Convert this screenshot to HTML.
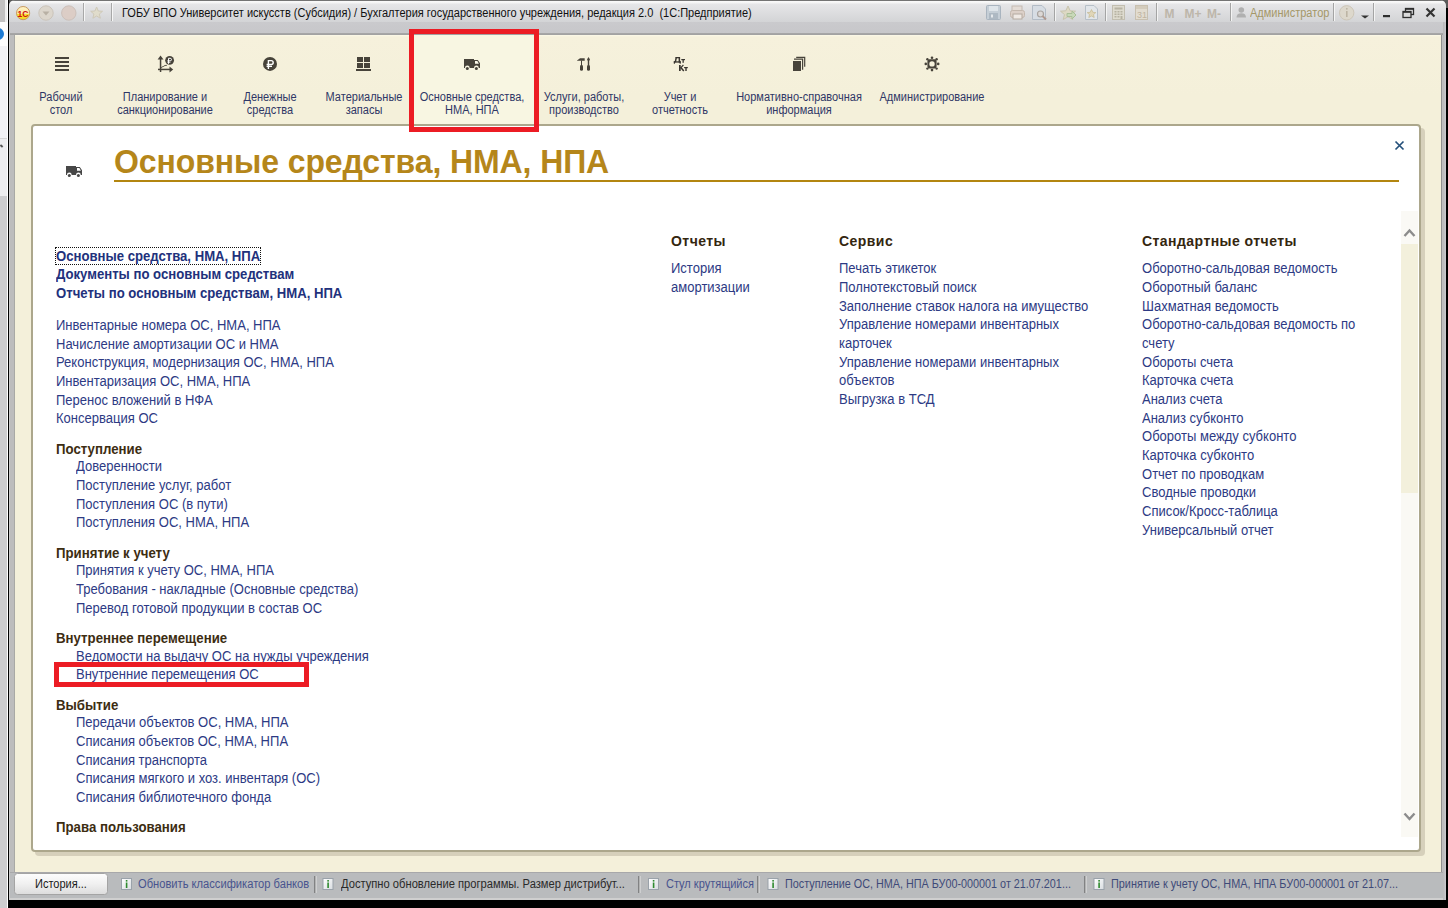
<!DOCTYPE html>
<html><head><meta charset="utf-8">
<style>
*{margin:0;padding:0;box-sizing:border-box}
html,body{width:1448px;height:908px;overflow:hidden;background:#000;font-family:"Liberation Sans",sans-serif}
.a{position:absolute}
#win{left:9px;top:0;width:1437px;height:900px;background:#bdbdbd;border-radius:6px 6px 0 0;overflow:hidden}
#titlebar{left:0;top:0;width:1437px;height:22px;background:linear-gradient(#5e5e5e 0,#8a8a8a 1px,#fbfbfb 1px,#f4f4f4 3px,#e6e6e8 4px,#d3d4d6 22px)}
#band{left:0;top:22px;width:1437px;height:13px;background:linear-gradient(#cacacd 0,#c7c7ca 11px,#a8a8a8 11px,#a0a0a0 13px)}
#cream{left:15px;top:35px;width:1426px;height:837px;background:linear-gradient(#fcf9e8 0,#f6f1dc 2px,#f4f0da 60px,#f4f0da)}
#status{left:9px;top:872px;width:1437px;height:28px;background:#b9bbbd;border-top:1px solid #a8a8aa;border-bottom:2px solid #cfcfcf}
.nav{position:absolute;top:91px;font-size:12px;line-height:13px;color:#2f3766;text-align:center;white-space:nowrap;transform:scaleX(.917)}
#panel{left:31px;top:124px;width:1390px;height:728px;background:#fff;border:2px solid #aca78c;border-radius:4px;box-shadow:4px 4px 0 #d6d0bb}
.t{position:absolute;white-space:nowrap;font-size:14px;line-height:16px;color:#2d3a84;transform:scaleX(.93);transform-origin:0 0}
.b{font-weight:bold;transform:scaleX(.938);color:#22317c}
.h{font-weight:bold;color:#3d2d12;transform:scaleX(.945)}
.h14{font-weight:bold;color:#34260f;font-size:14px;line-height:16px;letter-spacing:.45px;transform:none}
.red{position:absolute;border:5px solid #ec1c24}
.tt{position:absolute;white-space:nowrap;font-size:12px;line-height:13px;transform:scaleX(.917);transform-origin:0 0}
</style></head><body>
<div class="a" style="left:0;top:0;width:7px;height:908px;background:#cdcdcf"></div>
<div class="a" style="left:0;top:0;width:5px;height:22px;background:#c2c1c1"></div>
<div class="a" style="left:5px;top:0;width:2px;height:22px;background:#ededed"></div>
<div class="a" style="left:0;top:22px;width:7px;height:24px;background:#fdfdfd"></div>
<div class="a" style="left:-8px;top:28px;width:12px;height:12px;border-radius:50%;background:#1d7bd4"></div>
<div class="a" style="left:0;top:46px;width:7px;height:92px;background:#f2f2f5"></div>
<div class="a" style="left:0;top:138px;width:7px;height:1px;background:#d6d6d6"></div>
<div class="a" style="left:0;top:139px;width:7px;height:57px;background:#ededef"></div>
<div class="a" style="left:0;top:145px;width:3px;height:2px;background:#555;transform:rotate(40deg)"></div>
<div class="a" style="left:7px;top:0;width:1px;height:908px;background:#fff"></div>
<div class="a" style="left:8px;top:0;width:1px;height:908px;background:#000"></div>
<div class="a" style="left:9px;top:0;width:1439px;height:8px;background:#5a5a5a"></div>
<div id="win" class="a">
  <div id="titlebar" class="a"></div>
  <div id="band" class="a"></div>
</div>
<div id="cream" class="a"></div>
<div class="a" style="left:414px;top:35px;width:120px;height:92px;background:#f8f6e2"></div>
<div id="status" class="a"></div>

<!-- title -->
<div class="tt" style="left:1250px;top:7px;color:#a49768">Администратор</div>
<div class="a" style="left:14px;top:35px;width:1px;height:837px;background:#a9a9a5"></div>
<div class="a" style="left:9px;top:22px;width:1px;height:878px;background:#cbcbcb"></div>
<div class="a" style="left:1441px;top:35px;width:1px;height:837px;background:#8f8f8f"></div>
<div class="a" style="left:1443px;top:22px;width:3px;height:878px;background:linear-gradient(90deg,#b9b9b9,#c9c9cd)"></div>
<div class="tt" style="left:122px;top:7px;color:#111">ГОБУ ВПО Университет искусств (Субсидия) / Бухгалтерия государственного учреждения, редакция 2.0&nbsp; (1С:Предприятие)</div>

<!-- nav -->
<div class="nav" style="left:21px;width:80px">Рабочий<br>стол</div>
<div class="nav" style="left:105px;width:120px">Планирование и<br>санкционирование</div>
<div class="nav" style="left:230px;width:80px">Денежные<br>средства</div>
<div class="nav" style="left:314px;width:100px">Материальные<br>запасы</div>
<div class="nav" style="left:412px;width:120px">Основные средства,<br>НМА, НПА</div>
<div class="nav" style="left:524px;width:120px">Услуги, работы,<br>производство</div>
<div class="nav" style="left:630px;width:100px">Учет и<br>отчетность</div>
<div class="nav" style="left:729px;width:140px">Нормативно-справочная<br>информация</div>
<div class="nav" style="left:862px;width:140px">Администрирование</div>


<!-- panel -->
<div id="panel" class="a"></div>
<div class="a" style="left:114px;top:180px;width:1285px;height:2px;background:#b38610"></div>
<div class="t" style="left:114px;top:143px;font-size:32px;line-height:36px;font-weight:bold;letter-spacing:-0.1px;transform:scaleY(1.045);transform-origin:0 0;color:#b5861a">Основные средства, НМА, НПА</div>

<svg class="a" style="left:0;top:0" width="1448" height="908" viewBox="0 0 1448 908">
<defs>
 <linearGradient id="g1c" x1="0" y1="0" x2="0" y2="1"><stop offset="0" stop-color="#fff3c8"/><stop offset=".55" stop-color="#fde9a0"/><stop offset=".6" stop-color="#f8e030"/><stop offset="1" stop-color="#f2d820"/></linearGradient>
</defs>
<!-- title bar left icons -->
<circle cx="23.1" cy="13.1" r="6.6" fill="url(#g1c)" stroke="#c89a60" stroke-width="1"/>
<text x="17.6" y="16.6" font-family="Liberation Sans" font-weight="bold" font-size="8.5" fill="#d01010">1С</text>
<circle cx="46" cy="13" r="7.2" fill="#dcd6cc" stroke="#cbc4ba" stroke-width="1"/>
<path d="M42.5 11.5 L49.5 11.5 L46 15.5 Z" fill="#b8b0a4"/>
<circle cx="68.8" cy="13" r="7.2" fill="#dccdc6" stroke="#ccc0ba" stroke-width="1"/>
<rect x="83" y="3" width="1" height="18" fill="#a8a8a8"/><rect x="84" y="3" width="1" height="18" fill="#f6f6f6"/>
<path d="M96.6 7 L98.3 11 L102.5 11.3 L99.3 14 L100.3 18.2 L96.6 16 L92.9 18.2 L93.9 14 L90.7 11.3 L94.9 11 Z" fill="#e0dccb" stroke="#cfc9b8" stroke-width="1"/>
<rect x="111" y="3" width="1" height="18" fill="#a8a8a8"/><rect x="112" y="3" width="1" height="18" fill="#f6f6f6"/>

<!-- title bar right icons -->
<g opacity="1">
 <rect x="986.5" y="5.5" width="14" height="14" rx="1" fill="#c5ced6" stroke="#a9b4bf"/>
 <rect x="989" y="6" width="9" height="5" fill="#dfe5ea"/>
 <rect x="989" y="13" width="9" height="6" fill="#aeb9c3"/>
 <rect x="991" y="14.5" width="2" height="3" fill="#e6e9ec"/>
 <rect x="1012" y="6" width="10" height="5" fill="#e4dcd6" stroke="#c4bab2"/>
 <rect x="1010.5" y="10.5" width="14" height="7" rx="2" fill="#dcd0c8" stroke="#c4b8ae"/>
 <rect x="1013" y="14" width="9" height="5" fill="#efe9e4" stroke="#b4aaa0"/>
 <path d="M1032.5 5.5 L1042 5.5 L1045.5 9 L1045.5 19.5 L1032.5 19.5 Z" fill="#d7dde4" stroke="#b3bcc6"/>
 <circle cx="1040.5" cy="14" r="3" fill="#dcd8d6" stroke="#a9a4a0" stroke-width="1.2"/>
 <path d="M1042.5 16 L1046 19.5" stroke="#b09a90" stroke-width="2"/>
 <rect x="1054" y="3" width="1" height="18" fill="#a4a4a4"/><rect x="1055" y="3" width="1" height="18" fill="#f4f4f4"/>
 <path d="M1068 6 L1070.2 10.8 L1075.5 11.2 L1071.5 14.6 L1072.8 19.5 L1068 16.8 L1063.2 19.5 L1064.5 14.6 L1060.5 11.2 L1065.8 10.8 Z" fill="#ddd9c4" stroke="#c9c4ae"/>
 <path d="M1067 13.5 h5 v-2.5 l4 4 l-4 4 v-2.5 h-5 Z" fill="#c8d8b8" stroke="#aabf98"/>
 <path d="M1085.5 5.5 L1094 5.5 L1097.5 9 L1097.5 19.5 L1085.5 19.5 Z" fill="#e2e6ea" stroke="#b7c0c8"/>
 <path d="M1091.5 9.5 L1092.8 12.3 L1095.8 12.6 L1093.5 14.6 L1094.2 17.5 L1091.5 16 L1088.8 17.5 L1089.5 14.6 L1087.2 12.6 L1090.2 12.3 Z" fill="#e0d6b8" stroke="#c8bc98" stroke-width=".8"/>
 <rect x="1105" y="3" width="1" height="18" fill="#a4a4a4"/><rect x="1106" y="3" width="1" height="18" fill="#f4f4f4"/>
 <rect x="1112.5" y="5.5" width="12" height="14" fill="#dedbcf" stroke="#c2beb0"/>
 <rect x="1114.5" y="7.5" width="8" height="2" fill="#b8b4a4"/>
 <g fill="#b6b2a2"><rect x="1114.5" y="11" width="2" height="1.5"/><rect x="1117.5" y="11" width="2" height="1.5"/><rect x="1120.5" y="11" width="2" height="1.5"/><rect x="1114.5" y="13.5" width="2" height="1.5"/><rect x="1117.5" y="13.5" width="2" height="1.5"/><rect x="1120.5" y="13.5" width="2" height="1.5"/><rect x="1114.5" y="16" width="2" height="1.5"/><rect x="1117.5" y="16" width="2" height="1.5"/><rect x="1120.5" y="16" width="2" height="3"/></g>
 <rect x="1135.5" y="5.5" width="12" height="14" fill="#e2dcd0" stroke="#c8c0b0"/>
 <rect x="1136" y="6" width="11" height="3" fill="#d4ccbc"/>
 <text x="1137" y="18" font-family="Liberation Sans" font-size="9" fill="#bfb4a0">31</text>
 <rect x="1156" y="3" width="1" height="18" fill="#a4a4a4"/><rect x="1157" y="3" width="1" height="18" fill="#f4f4f4"/>
 <text x="1164.5" y="17.5" font-family="Liberation Sans" font-weight="bold" font-size="12" fill="#bdb6aa">M</text>
 <text x="1184.5" y="17.5" font-family="Liberation Sans" font-weight="bold" font-size="12" fill="#bdb6aa">M+</text>
 <text x="1207" y="17.5" font-family="Liberation Sans" font-weight="bold" font-size="12" fill="#bdb6aa">M-</text>
 <rect x="1230" y="3" width="1" height="18" fill="#a4a4a4"/><rect x="1231" y="3" width="1" height="18" fill="#f4f4f4"/>
 <circle cx="1241.3" cy="10" r="2.8" fill="#b0b0b0"/>
 <path d="M1236.5 17.5 Q1236.5 13.2 1241.3 13.2 Q1246 13.2 1246 17.5 Z" fill="#b0b0b0"/>
 
 <rect x="1333" y="3" width="1" height="18" fill="#a4a4a4"/><rect x="1334" y="3" width="1" height="18" fill="#f4f4f4"/>
 <circle cx="1346.7" cy="12.8" r="7.2" fill="#ddd8cc" stroke="#cdc6b8"/>
 <rect x="1346" y="11" width="1.6" height="6" fill="#bdb5a4"/>
 <rect x="1346" y="8" width="1.6" height="1.6" fill="#bdb5a4"/>
 <path d="M1361 15.5 L1369 15.5 L1365 18.5 Z" fill="#333"/>
 <rect x="1373" y="3" width="1" height="18" fill="#a4a4a4"/><rect x="1374" y="3" width="1" height="18" fill="#f4f4f4"/>
 <rect x="1383" y="15" width="7" height="2.2" fill="#2e2e2e"/>
 <rect x="1405.5" y="8.5" width="8" height="6" fill="none" stroke="#2e2e2e" stroke-width="1.3"/>
 <rect x="1405.5" y="8.2" width="8" height="1.6" fill="#2e2e2e"/>
 <rect x="1403" y="11.5" width="8" height="6" fill="#dadada" stroke="#2e2e2e" stroke-width="1.3"/>
 <rect x="1403" y="11.2" width="8" height="1.6" fill="#2e2e2e"/>
 <path d="M1426.5 8.5 L1434.5 16.5 M1434.5 8.5 L1426.5 16.5" stroke="#333" stroke-width="2.2"/>
</g>

<!-- nav icons -->
<g fill="#47433a">
 <rect x="55" y="57" width="14" height="2"/><rect x="55" y="61" width="14" height="2"/><rect x="55" y="65" width="14" height="2"/><rect x="55" y="69" width="14" height="2"/>
 <!-- planning -->
 <rect x="159.8" y="58" width="1.5" height="14"/>
 <path d="M157.6 59.5 L163.5 59.5 L160.5 55.5 Z"/>
 <rect x="158" y="68.7" width="12" height="1.5"/>
 <path d="M169.5 66.5 L169.5 72.5 L173.2 69.5 Z"/>
 <path d="M161.2 67.6 L162.4 66.8 L163.4 66.5 L164.3 65.8 L165.2 65.5 L166.8 65.3" fill="none" stroke="#47433a" stroke-width="1"/>
 <circle cx="169.6" cy="60.3" r="4.4"/>
 <!-- ruble -->
 <circle cx="270" cy="63.9" r="7"/>
 <!-- grid -->
 <rect x="357" y="57" width="6" height="5"/><rect x="364" y="57" width="6" height="5"/><rect x="357" y="63" width="6" height="5"/><rect x="364" y="63" width="6" height="5"/><rect x="356" y="69" width="15" height="2"/>
 <!-- truck nav -->
 <path d="M464 59 H474 V60 H477.8 L480 63.2 V68 H478.8 A2.4 2.4 0 0 0 474 68 H469.7 A2.4 2.4 0 0 0 464.9 68 H464 Z"/>
 <circle cx="467.3" cy="68.6" r="1.5"/><circle cx="476.4" cy="68.6" r="1.5"/>
<path d="M475 61 H477.4 L478.9 63.8 H475 Z" fill="#fbf9ea"/>
 <!-- tools -->
 <path d="M577 60.5 L580 58.2 L584.7 58.2 L584.7 60.8 L577 60.8 Z"/>
 <rect x="581" y="60.5" width="1" height="5"/>
 <rect x="580" y="65" width="3" height="5.8" rx="1.4"/>
 <path d="M588.5 57 L590 59.5 L589.2 61 L589.2 65 L587.8 65 L587.8 61 L587 59.5 Z"/>
 <rect x="587" y="65" width="3" height="5.8" rx="1.4"/>
 <!-- docs -->
 <rect x="793" y="61" width="8" height="10"/>
 <path d="M794 59.2 L802.6 59.2 L802.6 69.7" fill="none" stroke="#47433a" stroke-width="1.2"/>
 <path d="M796.2 57.4 L804.7 57.4 L804.7 66.8" fill="none" stroke="#47433a" stroke-width="1.2"/>
 <!-- gear -->
 <path d="M929.4 59.3 H934.6 A2 2 0 0 1 936.6 61.3 V66.5 A2 2 0 0 1 934.6 68.5 H929.4 A2 2 0 0 1 927.4 66.5 V61.3 A2 2 0 0 1 929.4 59.3 Z M932 61.2 A2.7 2.7 0 1 0 932 66.6 A2.7 2.7 0 1 0 932 61.2 Z" fill-rule="evenodd"/>
 <circle cx="932" cy="57.7" r="1.3"/><circle cx="932" cy="70.1" r="1.3"/><circle cx="925.8" cy="63.9" r="1.3"/><circle cx="938.2" cy="63.9" r="1.3"/>
 <circle cx="927.4" cy="59.2" r="1.2"/><circle cx="936.6" cy="59.2" r="1.2"/><circle cx="927.4" cy="68.6" r="1.2"/><circle cx="936.6" cy="68.6" r="1.2"/>
</g>
<path d="M268.4 69 V60.6 H271.2 A2 1.95 0 0 1 271.2 64.5 H266.6 M266.6 66.4 H272" fill="none" stroke="#fff" stroke-width="1.4"/>
<path d="M168.5 63.8 V58.3 H170.2 A1.3 1.25 0 0 1 170.2 60.8 H167.4 M167.4 62.2 H170.4" fill="none" stroke="#fff" stroke-width="1"/>
<g fill="#3a3630">
 <rect x="675.6" y="57" width="4.4" height="1.3"/><rect x="678.6" y="57" width="1.5" height="5.6"/>
 <path d="M675.6 57 H677.1 L676.1 62.3 H674.6 Z"/>
 <rect x="673.8" y="61.3" width="7" height="1.3"/><rect x="673.8" y="61.3" width="1.2" height="2.4"/><rect x="679.6" y="61.3" width="1.2" height="2.4"/>
 <rect x="681.3" y="59" width="3.7" height="1.2"/><rect x="682.5" y="59" width="1.3" height="3.8"/>
 <rect x="679" y="65" width="1.7" height="6"/>
 <path d="M680.4 68.2 L683.4 65" stroke="#3a3630" stroke-width="1.1" fill="none"/>
 <path d="M680.8 67.4 L683.8 71" stroke="#3a3630" stroke-width="1.5" fill="none"/>
 <rect x="684.1" y="67" width="3.7" height="1.2"/><rect x="685.3" y="67" width="1.4" height="4"/>
</g>

<!-- panel icons -->
<g transform="translate(-398,107)"><g fill="#474747"><path d="M464 59 H474 V60 H477.8 L480 63.2 V68 H478.8 A2.4 2.4 0 0 0 474 68 H469.7 A2.4 2.4 0 0 0 464.9 68 H464 Z"/><circle cx="467.3" cy="68.6" r="1.5"/><circle cx="476.4" cy="68.6" r="1.5"/></g><path d="M475 61 H477.4 L478.9 63.8 H475 Z" fill="#fff"/></g>
<path d="M1395.5 141.5 L1403.5 149.5 M1403.5 141.5 L1395.5 149.5" stroke="#24507a" stroke-width="1.7"/>
</svg>

<svg class="a" style="left:0;top:0" width="1448" height="908" viewBox="0 0 1448 908">
<defs>
 <linearGradient id="gbtn" x1="0" y1="0" x2="0" y2="1"><stop offset="0" stop-color="#fdfdfd"/><stop offset=".5" stop-color="#f0f0f0"/><stop offset="1" stop-color="#dcdcdc"/></linearGradient>
 <linearGradient id="gico" x1="0" y1="0" x2="1" y2="1"><stop offset="0" stop-color="#ffffff"/><stop offset="1" stop-color="#d8dce0"/></linearGradient>
</defs>
<!-- scrollbar -->
<rect x="1401" y="211" width="17" height="33" fill="#faf9f5"/>
<rect x="1401" y="244" width="17" height="249" fill="#f3f0dc"/>
<rect x="1401" y="493" width="17" height="344" fill="#faf9f4"/>
<path d="M1404.5 236 L1409.5 230.5 L1414.5 236" fill="none" stroke="#8c8c8c" stroke-width="2.4"/>
<path d="M1404.5 813.5 L1409.5 819 L1414.5 813.5" fill="none" stroke="#8c8c8c" stroke-width="2.4"/>

<!-- status bar -->
<rect x="14.5" y="873.5" width="93" height="21" rx="3" fill="url(#gbtn)" stroke="#a4a4a4"/>
<g>
 <rect x="121.5" y="878.5" width="10" height="11" fill="url(#gico)" stroke="#9aa2aa"/>
 <rect x="125.8" y="880" width="1.6" height="1.6" fill="#2e8a2e"/>
 <rect x="125.8" y="882.5" width="1.6" height="5.5" fill="#2e8a2e"/>
</g>
<rect x="314.5" y="876" width="1" height="17" fill="#4a4a4a"/><rect x="315.5" y="876" width="1" height="17" fill="#e4e4e4"/>
<g transform="translate(201.5,0)">
 <rect x="121.5" y="878.5" width="10" height="11" fill="url(#gico)" stroke="#9aa2aa"/>
 <rect x="125.8" y="880" width="1.6" height="1.6" fill="#2e8a2e"/>
 <rect x="125.8" y="882.5" width="1.6" height="5.5" fill="#2e8a2e"/>
</g>
<rect x="638.5" y="876" width="1" height="17" fill="#4a4a4a"/><rect x="639.5" y="876" width="1" height="17" fill="#e4e4e4"/>
<g transform="translate(527,0)">
 <rect x="121.5" y="878.5" width="10" height="11" fill="url(#gico)" stroke="#9aa2aa"/>
 <rect x="125.8" y="880" width="1.6" height="1.6" fill="#2e8a2e"/>
 <rect x="125.8" y="882.5" width="1.6" height="5.5" fill="#2e8a2e"/>
</g>
<rect x="757.5" y="876" width="1" height="17" fill="#4a4a4a"/><rect x="758.5" y="876" width="1" height="17" fill="#e4e4e4"/>
<g transform="translate(646.5,0)">
 <rect x="121.5" y="878.5" width="10" height="11" fill="url(#gico)" stroke="#9aa2aa"/>
 <rect x="125.8" y="880" width="1.6" height="1.6" fill="#2e8a2e"/>
 <rect x="125.8" y="882.5" width="1.6" height="5.5" fill="#2e8a2e"/>
</g>
<rect x="1084.5" y="876" width="1" height="17" fill="#4a4a4a"/><rect x="1085.5" y="876" width="1" height="17" fill="#e4e4e4"/>
<g transform="translate(972.5,0)">
 <rect x="121.5" y="878.5" width="10" height="11" fill="url(#gico)" stroke="#9aa2aa"/>
 <rect x="125.8" y="880" width="1.6" height="1.6" fill="#2e8a2e"/>
 <rect x="125.8" y="882.5" width="1.6" height="5.5" fill="#2e8a2e"/>
</g>
</svg>
<div class="tt" style="left:35px;top:878px;color:#1a1a1a">История...</div>
<div class="tt" style="left:138px;top:878px;color:#48548e;transform:scaleX(.929)">Обновить классификатор банков</div>
<div class="tt" style="left:341px;top:878px;color:#2a2a2a;transform:scaleX(.931)">Доступно обновление программы. Размер дистрибут...</div>
<div class="tt" style="left:666px;top:878px;color:#48548e">Стул крутящийся</div>
<div class="tt" style="left:785px;top:878px;color:#3e4a78;transform:scaleX(.90)">Поступление ОС, НМА, НПА БУ00-000001 от 21.07.201...</div>
<div class="tt" style="left:1111px;top:878px;color:#3e4a78;transform:scaleX(.905)">Принятие к учету ОС, НМА, НПА БУ00-000001 от 21.07...</div>

<div class="t b" style="left:56px;top:248px">Основные средства, НМА, НПА</div>
<div class="t b" style="left:56px;top:266px">Документы по основным средствам</div>
<div class="t b" style="left:56px;top:285px">Отчеты по основным средствам, НМА, НПА</div>
<div class="t" style="left:56px;top:317px">Инвентарные номера ОС, НМА, НПА</div>
<div class="t" style="left:56px;top:336px">Начисление амортизации ОС и НМА</div>
<div class="t" style="left:56px;top:354px">Реконструкция, модернизация ОС, НМА, НПА</div>
<div class="t" style="left:56px;top:373px">Инвентаризация ОС, НМА, НПА</div>
<div class="t" style="left:56px;top:392px">Перенос вложений в НФА</div>
<div class="t" style="left:56px;top:410px">Консервация ОС</div>
<div class="t h" style="left:56px;top:441px">Поступление</div>
<div class="t" style="left:76px;top:458px">Доверенности</div>
<div class="t" style="left:76px;top:477px">Поступление услуг, работ</div>
<div class="t" style="left:76px;top:496px">Поступления ОС (в пути)</div>
<div class="t" style="left:76px;top:514px">Поступления ОС, НМА, НПА</div>
<div class="t h" style="left:56px;top:545px">Принятие к учету</div>
<div class="t" style="left:76px;top:562px">Принятия к учету ОС, НМА, НПА</div>
<div class="t" style="left:76px;top:581px">Требования - накладные (Основные средства)</div>
<div class="t" style="left:76px;top:600px">Перевод готовой продукции в состав ОС</div>
<div class="t h" style="left:56px;top:630px">Внутреннее перемещение</div>
<div class="t" style="left:76px;top:648px">Ведомости на выдачу ОС на нужды учреждения</div>
<div class="t" style="left:76px;top:666px">Внутренние перемещения ОС</div>
<div class="t h" style="left:56px;top:697px">Выбытие</div>
<div class="t" style="left:76px;top:714px">Передачи объектов ОС, НМА, НПА</div>
<div class="t" style="left:76px;top:733px">Списания объектов ОС, НМА, НПА</div>
<div class="t" style="left:76px;top:752px">Списания транспорта</div>
<div class="t" style="left:76px;top:770px">Списания мягкого и хоз. инвентаря (ОС)</div>
<div class="t" style="left:76px;top:789px">Списания библиотечного фонда</div>
<div class="t h" style="left:56px;top:819px">Права пользования</div>
<div class="t h14" style="left:671px;top:233px">Отчеты</div>
<div class="t" style="left:671px;top:260px">История</div>
<div class="t" style="left:671px;top:279px">амортизации</div>
<div class="t h14" style="left:839px;top:233px">Сервис</div>
<div class="t" style="left:839px;top:260px">Печать этикеток</div>
<div class="t" style="left:839px;top:279px">Полнотекстовый поиск</div>
<div class="t" style="left:839px;top:298px">Заполнение ставок налога на имущество</div>
<div class="t" style="left:839px;top:316px">Управление номерами инвентарных</div>
<div class="t" style="left:839px;top:335px">карточек</div>
<div class="t" style="left:839px;top:354px">Управление номерами инвентарных</div>
<div class="t" style="left:839px;top:372px">объектов</div>
<div class="t" style="left:839px;top:391px">Выгрузка в ТСД</div>
<div class="t h14" style="left:1142px;top:233px">Стандартные отчеты</div>
<div class="t" style="left:1142px;top:260px">Оборотно-сальдовая ведомость</div>
<div class="t" style="left:1142px;top:279px">Оборотный баланс</div>
<div class="t" style="left:1142px;top:298px">Шахматная ведомость</div>
<div class="t" style="left:1142px;top:316px">Оборотно-сальдовая ведомость по</div>
<div class="t" style="left:1142px;top:335px">счету</div>
<div class="t" style="left:1142px;top:354px">Обороты счета</div>
<div class="t" style="left:1142px;top:372px">Карточка счета</div>
<div class="t" style="left:1142px;top:391px">Анализ счета</div>
<div class="t" style="left:1142px;top:410px">Анализ субконто</div>
<div class="t" style="left:1142px;top:428px">Обороты между субконто</div>
<div class="t" style="left:1142px;top:447px">Карточка субконто</div>
<div class="t" style="left:1142px;top:466px">Отчет по проводкам</div>
<div class="t" style="left:1142px;top:484px">Сводные проводки</div>
<div class="t" style="left:1142px;top:503px">Список/Кросс-таблица</div>
<div class="t" style="left:1142px;top:522px">Универсальный отчет</div>
<div class="a" style="left:55px;top:247px;width:206px;height:18px;border:1px dotted #111"></div>

<div class="red" style="left:54px;top:662px;width:255px;height:25px"></div>
<div class="red" style="left:409px;top:29px;width:130px;height:103px"></div>
</body></html>
